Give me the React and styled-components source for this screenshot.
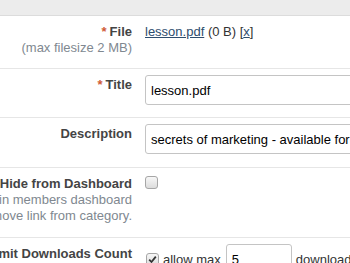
import styled, { createGlobalStyle } from "styled-components";

const GlobalStyle = createGlobalStyle`
  html, body {
    margin: 0;
    padding: 0;
    background: #fff;
    overflow: hidden;
  }
  body {
    font-family: "Liberation Sans", Arial, sans-serif;
    font-size: 13px;
    color: #333;
  }
`

const Page = styled.div`
  width: 100%;
`

const TopBar = styled.div`
  height: 15px;
  background: #ececec;
  border-bottom: 1px solid #dcdcdc;
`

const Row = styled.div`
  display: grid;
  grid-template-columns: 132px 1fr;
  column-gap: 13px;
  padding: 7px 0 ${(p) => p.$bottom || 12}px;
  border-bottom: 1px solid #e6e6e6;
`

const LabelCell = styled.div`
  min-width: 0;
  padding-top: 1px;
  display: flex;
  flex-direction: column;
  align-items: flex-end;
`

const Label = styled.div`
  font-weight: bold;
  line-height: 16px;
  white-space: nowrap;
  color: #444;
`

const Required = styled.span`
  color: #cf5a36;
  margin-right: 3px;
`

const Hint = styled.div`
  line-height: 16px;
  white-space: nowrap;
  color: #808890;
`

const FieldCell = styled.div`
  min-width: 0;
  padding-top: 1px;
  display: flex;
  align-items: ${(p) => (p.$inline ? "baseline" : "flex-start")};
  gap: 4px;
  line-height: 16px;
  white-space: nowrap;
`

const FileLink = styled.a`
  color: #2e4d6e;
  text-decoration: underline;
`

const TextInput = styled.input`
  box-sizing: border-box;
  height: 30px;
  width: ${(p) => p.$width || "330px"};
  padding: 0 5px;
  border: 1px solid #c4c4c4;
  border-radius: 3px;
  font-family: inherit;
  font-size: 13px;
  color: #000;
  background: #fff;
  flex-shrink: 0;
  margin-top: -2px;
  outline: none;
`

const Box = styled.span`
  box-sizing: border-box;
  display: inline-flex;
  align-items: center;
  justify-content: center;
  width: 13px;
  height: 13px;
  flex-shrink: 0;
  border: 1px solid #a6a6a6;
  border-radius: 3px;
  background: linear-gradient(#f7f7f7, #dcdcdc);
  margin: ${(p) => (p.$inline ? "0 0 1px 1px" : "0")};
`

const Check = () => (
  <svg width="9" height="9" viewBox="0 0 9 9">
    <path d="M1.2 4.6 L3.5 7 L7.8 1.6" fill="none" stroke="#333" strokeWidth="1.8" />
  </svg>
)

export default function App() {
  return (
    <>
      <GlobalStyle />
      <Page>
        <TopBar />
        <Row>
          <LabelCell>
            <Label><Required>*</Required>File</Label>
            <Hint>(max filesize 2 MB)</Hint>
          </LabelCell>
          <FieldCell>
            <span>
              <FileLink href="#">lesson.pdf</FileLink> (0 B) [<FileLink href="#">x</FileLink>]
            </span>
          </FieldCell>
        </Row>
        <Row>
          <LabelCell>
            <Label><Required>*</Required>Title</Label>
          </LabelCell>
          <FieldCell>
            <TextInput defaultValue="lesson.pdf" />
          </FieldCell>
        </Row>
        <Row $bottom={13}>
          <LabelCell>
            <Label>Description</Label>
          </LabelCell>
          <FieldCell>
            <TextInput defaultValue="secrets of marketing - available for members only" />
          </FieldCell>
        </Row>
        <Row $bottom={13}>
          <LabelCell>
            <Label>Hide from Dashboard</Label>
            <Hint>do not show link in members dashboard</Hint>
            <Hint>but do not remove link from category.</Hint>
          </LabelCell>
          <FieldCell>
            <Box />
          </FieldCell>
        </Row>
        <Row>
          <LabelCell>
            <Label>Limit Downloads Count</Label>
          </LabelCell>
          <FieldCell $inline>
            <Box $inline><Check /></Box>
            <span>allow max</span>
            <TextInput $width="66px" defaultValue="5" style={{ marginLeft: 1 }} />
            <span>downloads within</span>
          </FieldCell>
        </Row>
      </Page>
    </>
  )
}
